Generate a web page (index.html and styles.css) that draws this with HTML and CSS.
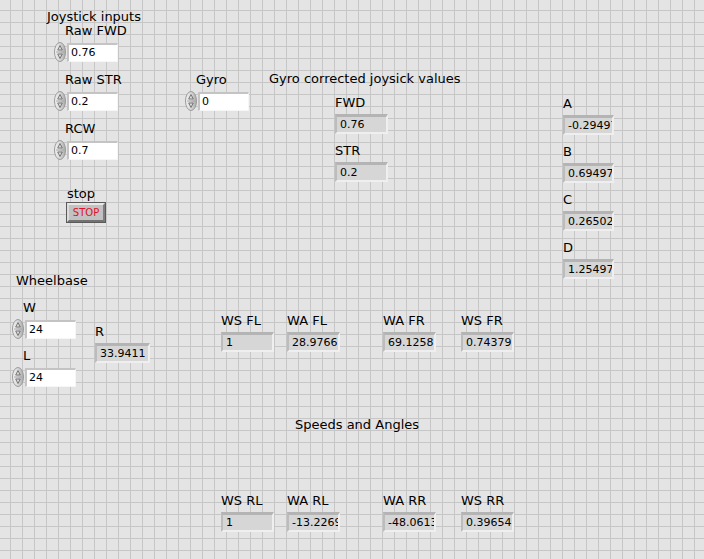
FILE: index.html
```html
<!DOCTYPE html>
<html lang="en">
<head>
  <meta charset="UTF-8">
  <title>Swerve drive front panel</title>
  <link rel="stylesheet" href="styles.css">
</head>
<body>

<div class="panel">
  <!-- free text labels -->
  <div class="txt t-joy">Joystick inputs</div>
  <div class="txt t-gyrocorr">Gyro corrected joysick values</div>
  <div class="txt t-wheelbase">Wheelbase</div>
  <div class="txt t-speeds">Speeds and Angles</div>

  <!-- numeric controls -->
  <div class="ctl c-rawfwd">
    <div class="lbl">Raw FWD</div>
    <div class="row">
      <svg class="spin" width="12" height="20" viewBox="0 0 12 20"><use href="#spinner"/></svg>
      <div class="num">0.76</div>
    </div>
  </div>
  <div class="ctl c-rawstr">
    <div class="lbl">Raw STR</div>
    <div class="row">
      <svg class="spin" width="12" height="20" viewBox="0 0 12 20"><use href="#spinner"/></svg>
      <div class="num">0.2</div>
    </div>
  </div>
  <div class="ctl c-rcw">
    <div class="lbl">RCW</div>
    <div class="row">
      <svg class="spin" width="12" height="20" viewBox="0 0 12 20"><use href="#spinner"/></svg>
      <div class="num">0.7</div>
    </div>
  </div>
  <div class="ctl c-gyro">
    <div class="lbl">Gyro</div>
    <div class="row">
      <svg class="spin" width="12" height="20" viewBox="0 0 12 20"><use href="#spinner"/></svg>
      <div class="num">0</div>
    </div>
  </div>
  <div class="ctl c-w">
    <div class="lbl">W</div>
    <div class="row">
      <svg class="spin" width="12" height="20" viewBox="0 0 12 20"><use href="#spinner"/></svg>
      <div class="num">24</div>
    </div>
  </div>
  <div class="ctl c-l">
    <div class="lbl">L</div>
    <div class="row">
      <svg class="spin" width="12" height="20" viewBox="0 0 12 20"><use href="#spinner"/></svg>
      <div class="num">24</div>
    </div>
  </div>

  <!-- stop button -->
  <div class="ctl c-stop">
    <div class="lbl">stop</div>
    <button class="stop">STOP</button>
  </div>

  <!-- indicators -->
  <div class="ind i-fwd"><div class="lbl">FWD</div><div class="box">0.76</div></div>
  <div class="ind i-str"><div class="lbl">STR</div><div class="box">0.2</div></div>

  <div class="ind i-a narrow"><div class="lbl">A</div><div class="box">-0.294974</div></div>
  <div class="ind i-b narrow"><div class="lbl">B</div><div class="box">0.694974</div></div>
  <div class="ind i-c narrow"><div class="lbl">C</div><div class="box">0.265025</div></div>
  <div class="ind i-d narrow"><div class="lbl">D</div><div class="box">1.254974</div></div>

  <div class="ind i-r wide"><div class="lbl">R</div><div class="box">33.9411</div></div>

  <div class="ind i-wsfl"><div class="lbl">WS FL</div><div class="box">1</div></div>
  <div class="ind i-wafl"><div class="lbl">WA FL</div><div class="box">28.97662</div></div>
  <div class="ind i-wafr"><div class="lbl">WA FR</div><div class="box">69.12589</div></div>
  <div class="ind i-wsfr"><div class="lbl">WS FR</div><div class="box">0.743793</div></div>

  <div class="ind i-wsrl"><div class="lbl">WS RL</div><div class="box">1</div></div>
  <div class="ind i-warl"><div class="lbl">WA RL</div><div class="box">-13.2269</div></div>
  <div class="ind i-warr"><div class="lbl">WA RR</div><div class="box">-48.0613</div></div>
  <div class="ind i-wsrr"><div class="lbl">WS RR</div><div class="box">0.396549</div></div>
</div>

<!-- shared increment/decrement glyph -->
<svg width="0" height="0" class="defs">
  <defs>
    <linearGradient id="spinFill" x1="0" y1="0" x2="1" y2="0">
      <stop offset="0" stop-color="#f4f4f4"/>
      <stop offset="0.55" stop-color="#d4d4d4"/>
      <stop offset="1" stop-color="#a8a8a8"/>
    </linearGradient>
    <g id="spinner">
      <ellipse cx="6" cy="10" rx="5.5" ry="9.5" fill="url(#spinFill)" stroke="#9a9a9a" stroke-width="1"/>
      <line x1="2" y1="10" x2="10" y2="10" stroke="#a0a0a0" stroke-width="0.8"/>
      <path d="M6 3.5 L8.3 8 L3.7 8 Z" fill="none" stroke="#6e6e6e" stroke-width="0.9"/>
      <path d="M6 16.5 L8.3 12 L3.7 12 Z" fill="none" stroke="#6e6e6e" stroke-width="0.9"/>
    </g>
  </defs>
</svg>

</body>
</html>
```

FILE: styles.css
```css
body {
  margin: 0;
  width: 704px;
  height: 559px;
  overflow: hidden;
  font-family: "DejaVu Sans", sans-serif;
  color: #000;
}
.defs {
  position: absolute;
}
.panel {
  position: relative;
  width: 704px;
  height: 559px;
  background-color: #e4e4e4;
  background-image:
    linear-gradient(to right, #c6c6c6 1px, transparent 1px),
    linear-gradient(to bottom, #c6c6c6 1px, transparent 1px);
  background-size: 12px 12px;
  background-position: 10px 10px;
}
.txt, .lbl {
  font-size: 13px;
  line-height: 18px;
  white-space: nowrap;
}
.txt, .ctl, .ind {
  position: absolute;
}

/* numeric controls */
.ctl .lbl {
  padding-left: 11px;
}
.row {
  display: flex;
  align-items: center;
  margin-top: 2px;
}
.spin {
  display: block;
  flex: none;
}
.num {
  width: 46px;
  height: 16px;
  margin-left: 1px;
  padding-left: 2px;
  background: #fff;
  border-top: 2px solid #c4c4c4;
  border-left: 2px solid #c4c4c4;
  border-bottom: 1px solid #f6f6f6;
  border-right: 1px solid #f6f6f6;
  font-size: 11px;
  line-height: 16px;
}

/* indicators */
.box {
  width: 46px;
  height: 15px;
  margin-top: 2px;
  padding-left: 3px;
  background: #d6d6d6;
  border-top: 3px solid #b4b4b4;
  border-left: 2px solid #bcbcbc;
  border-bottom: 2px solid #efefef;
  border-right: 2px solid #efefef;
  font-size: 11px;
  line-height: 15px;
  overflow: hidden;
  white-space: nowrap;
}
.narrow .box {
  width: 44px;
}
.wide .box {
  width: 48px;
}

/* stop button */
.c-stop .lbl {
  padding-left: 0;
}
.stop {
  display: block;
  margin-top: 0;
  width: 38px;
  height: 19px;
  padding: 0;
  background: #c2c2c2;
  border-top: 2px solid #e8e8e8;
  border-left: 2px solid #dcdcdc;
  border-bottom: 2px solid #727272;
  border-right: 2px solid #7e7e7e;
  outline: 1px solid #5a5a5a;
  color: #e0102a;
  font-family: "DejaVu Sans", sans-serif;
  font-size: 10px;
  line-height: 14px;
}

/* panel placement */
.t-joy { left: 47px; top: 8px; }
.t-gyrocorr { left: 269px; top: 70px; }
.t-wheelbase { left: 16px; top: 272px; }
.t-speeds { left: 295px; top: 416px; }

.c-rawfwd { left: 54px; top: 22px; }
.c-rawstr { left: 54px; top: 71px; }
.c-rcw { left: 54px; top: 120px; }
.c-gyro { left: 185px; top: 71px; }
.c-w { left: 12px; top: 299px; }
.c-l { left: 12px; top: 347px; }
.c-stop { left: 67px; top: 185px; }

.i-fwd { left: 335px; top: 94px; }
.i-str { left: 335px; top: 142px; }
.i-a { left: 563px; top: 95px; }
.i-b { left: 563px; top: 143px; }
.i-c { left: 563px; top: 191px; }
.i-d { left: 563px; top: 239px; }
.i-r { left: 95px; top: 323px; }

.i-wsfl { left: 221px; top: 312px; }
.i-wafl { left: 287px; top: 312px; }
.i-wafr { left: 383px; top: 312px; }
.i-wsfr { left: 461px; top: 312px; }

.i-wsrl { left: 221px; top: 492px; }
.i-warl { left: 287px; top: 492px; }
.i-warr { left: 383px; top: 492px; }
.i-wsrr { left: 461px; top: 492px; }
```
